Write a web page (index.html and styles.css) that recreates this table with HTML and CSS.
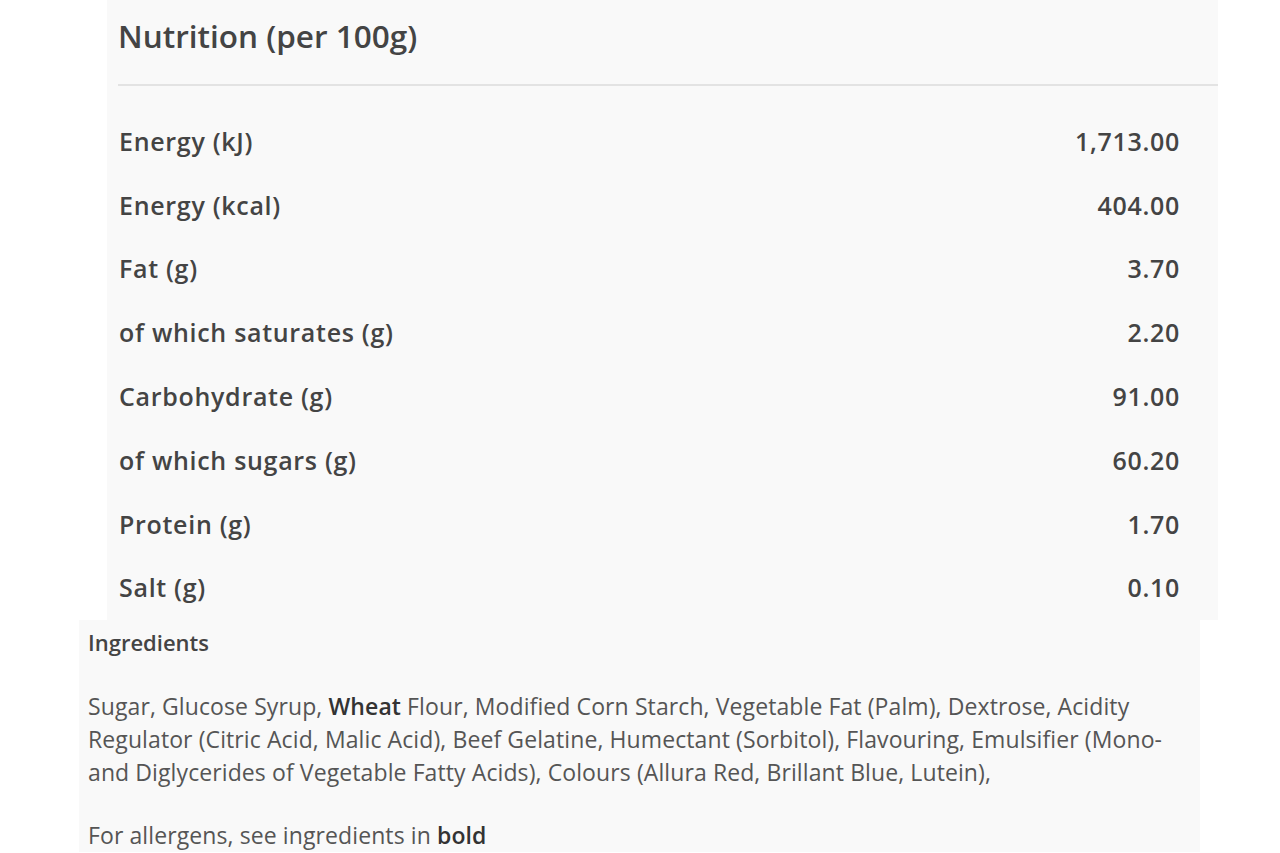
FILE: index.html
```html
<!DOCTYPE html>
<html lang="en">
<head>
<meta charset="utf-8">
<title>Nutrition</title>
<link rel="stylesheet" href="styles.css">
</head>
<body>
<section class="nutrition">
  <h2 class="nutrition-title">Nutrition (per 100g)</h2>
  <div class="divider"></div>
  <ul class="rows">
    <li class="row"><span>Energy (kJ)</span><span>1,713.00</span></li>
    <li class="row"><span>Energy (kcal)</span><span>404.00</span></li>
    <li class="row"><span>Fat (g)</span><span>3.70</span></li>
    <li class="row"><span>of which saturates (g)</span><span>2.20</span></li>
    <li class="row"><span>Carbohydrate (g)</span><span>91.00</span></li>
    <li class="row"><span>of which sugars (g)</span><span>60.20</span></li>
    <li class="row"><span>Protein (g)</span><span>1.70</span></li>
    <li class="row"><span>Salt (g)</span><span>0.10</span></li>
  </ul>
</section>
<section class="ingredients">
  <h3 class="ingredients-title">Ingredients</h3>
  <p class="ingredients-text">Sugar, Glucose Syrup, <b>Wheat</b> Flour, Modified Corn Starch, Vegetable Fat (Palm), Dextrose, Acidity Regulator (Citric Acid, Malic Acid), Beef Gelatine, Humectant (Sorbitol), Flavouring, Emulsifier (Mono- and Diglycerides of Vegetable Fatty Acids), Colours (Allura Red, Brillant Blue, Lutein),</p>
  <p class="ingredients-text">For allergens, see ingredients in <b>bold</b></p>
</section>
</body>
</html>
```

FILE: styles.css
```css
html, body {
  margin: 0;
  padding: 0;
  background: #ffffff;
}
body {
  font-family: "Open Sans", Lato, sans-serif;
  color: #444444;
}
.nutrition {
  margin-left: 107px;
  width: 1111px;
  background: #f9f9f9;
  padding: 0 0 1px 11px;
  box-sizing: border-box;
}
.nutrition-title {
  margin: 0;
  padding-top: 16px;
  height: 84px;
  box-sizing: border-box;
  font-size: 31.5px;
  line-height: 40px;
  font-weight: 600;
  color: #444;
}
.divider {
  height: 2px;
  background: #e3e3e3;
}
.rows {
  list-style: none;
  margin: 0;
  padding: 23px 38px 0 1px;
}
.row {
  display: flex;
  justify-content: space-between;
  height: 63.8px;
  align-items: center;
  font-size: 25px;
  letter-spacing: 0.7px;
  font-weight: 600;
  color: #444;
}
.ingredients {
  margin-left: 79px;
  width: 1121px;
  background: #f9f9f9;
  padding: 7px 8px 0 9px;
  box-sizing: border-box;
}
.ingredients-title {
  margin: 0 0 33px;
  font-size: 22px;
  line-height: 30px;
  font-weight: 600;
  color: #444;
}
.ingredients-text {
  margin: 0 0 30px;
  font-size: 23px;
  line-height: 33px;
  letter-spacing: 0.1px;
  color: #555;
}
.ingredients-text b {
  font-weight: 600;
  color: #333;
}
```
